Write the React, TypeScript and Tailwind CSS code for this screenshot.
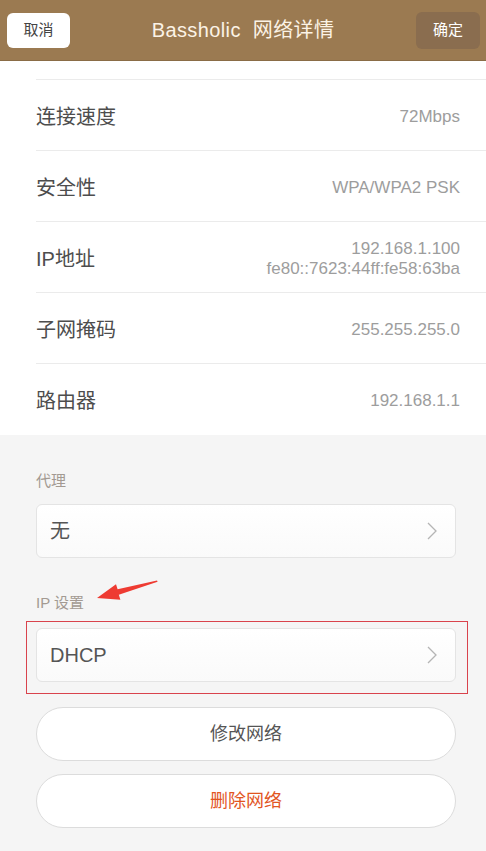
import React from 'react';

const font = { fontFamily: '"Liberation Sans", "Noto Sans CJK SC", sans-serif' };

const rows: { label: string; value: string[] }[] = [
  { label: '连接速度', value: ['72Mbps'] },
  { label: '安全性', value: ['WPA/WPA2 PSK'] },
  { label: 'IP地址', value: ['192.168.1.100', 'fe80::7623:44ff:fe58:63ba'] },
  { label: '子网掩码', value: ['255.255.255.0'] },
  { label: '路由器', value: ['192.168.1.1'] },
];

const Chevron = () => (
  <svg width="12" height="20" viewBox="0 0 12 20" fill="none">
    <polyline points="2,2 10,10 2,18" stroke="#b5b5b5" strokeWidth="1.3" />
  </svg>
);

const SelectBox = ({ text }: { text: string }) => (
  <div className="h-[54px] rounded-md border border-[#e4e4e4] bg-gradient-to-b from-white to-[#fafafa] flex items-center justify-between pl-[13px] pr-[17px]">
    <span className="text-[20px] text-[#555]">{text}</span>
    <Chevron />
  </div>
);

const App = () => {
  return (
    <div className="w-[486px] h-[851px] bg-[#f5f5f5] overflow-hidden" style={font}>
      <header className="h-[61px] bg-[#9b7a51] border-b border-[#8a6c46] flex items-center justify-between pl-[7px] pr-[6px]">
        <button className="w-[63px] h-[35px] bg-white rounded-md text-[15px] text-[#444]">取消</button>
        <span className="text-[20px] text-[#fbf3e6] tracking-[0.4px]">Bassholic&nbsp; 网络详情</span>
        <button className="w-[64px] h-[37px] bg-[#8a6d4f] rounded-md text-[15px] text-white">确定</button>
      </header>

      <section className="bg-white pl-9">
        <div className="h-[19px] border-b border-[#ebebeb]" />
        {rows.map((r, i) => (
          <div
            key={r.label}
            className={`h-[71px] flex items-center justify-between pr-[26px] pt-[3px] ${i < rows.length - 1 ? 'border-b border-[#ebebeb]' : ''}`}
          >
            <span className="text-[20px] text-[#4d4d4d]">{r.label}</span>
            <div className="flex flex-col items-end text-[17px] leading-[20px] text-[#9d9d9d]">
              {r.value.map((v) => (
                <span key={v}>{v}</span>
              ))}
            </div>
          </div>
        ))}
      </section>

      <section className="pl-9 pr-[30px] pt-9">
        <div className="h-5 text-[15px] leading-5 text-[#a39a92]">代理</div>
        <div className="mt-[13px]">
          <SelectBox text="无" />
        </div>

        <div className="relative mt-[35px] h-5 text-[15px] leading-5 text-[#a39a92]">
          IP 设置
          <svg className="absolute left-[58px] -top-[13px]" width="66" height="24" viewBox="0 0 66 24">
            <path d="M3 18 L22 4.3 L23.6 9.3 L63 0.4 L63.6 1.8 L24.8 14.7 L26.4 19.7 Z" fill="#ee3b32" />
          </svg>
        </div>
        <div className="relative mt-[15px]">
          <SelectBox text="DHCP" />
          <div className="absolute -left-[10px] -right-[12px] -top-[7px] -bottom-[12px] border border-[#d9434c]" />
        </div>

        <button className="mt-[25px] w-full h-[54px] rounded-full bg-white border border-[#dcdcdc] text-[18px] text-[#555]">
          修改网络
        </button>
        <button className="mt-[13px] w-full h-[54px] rounded-full bg-white border border-[#dcdcdc] text-[18px] text-[#e2561f]">
          删除网络
        </button>
      </section>
    </div>
  );
};

export default App;
